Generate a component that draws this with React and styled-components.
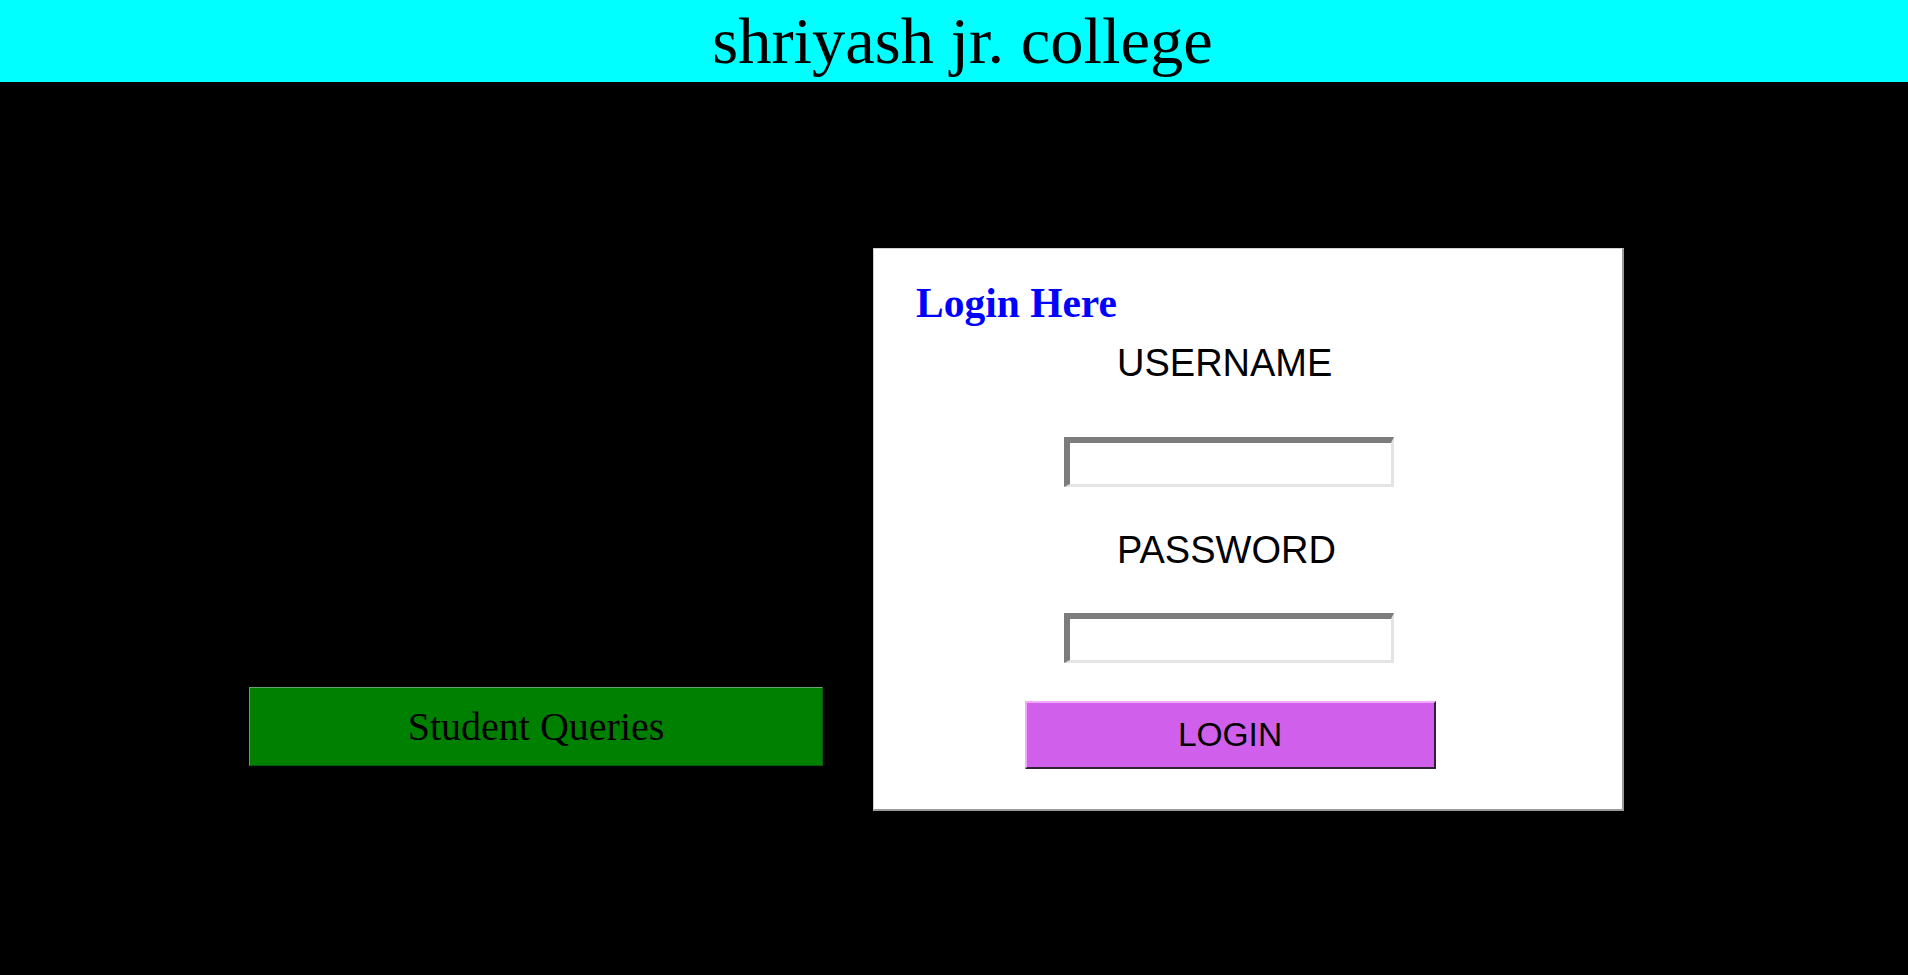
import React from "react"
import styled, { createGlobalStyle } from "styled-components"

const GlobalStyle = createGlobalStyle`
html, body {
  margin: 0;
  padding: 0;
  background: #000;
}
body {
  min-height: 100vh;
  font-family: "Liberation Serif", "Times New Roman", serif;
}
`

const Container = styled.div`
min-height: 100vh;
background: #000;
`

const Header = styled.header`
height: 82px;
padding-left: 17px;
background: #00ffff;
text-align: center;
`

const HeaderTitle = styled.h1`
margin: 0;
font-family: "Liberation Serif", "Times New Roman", serif;
font-weight: normal;
font-size: 66.5px;
line-height: 82px;
color: #000;
`

const Main = styled.main`
display: flex;
align-items: flex-end;
gap: 50px;
padding: 166px 0 0 249px;
`

const QueriesButton = styled.button`
width: 574px;
height: 79px;
margin-bottom: 45px;
padding: 0;
background: #008000;
border: 1px solid;
border-color: #66a366 #0a5a0a #0a5a0a #66a366;
font-family: "Liberation Serif", "Times New Roman", serif;
font-size: 40px;
color: #000;
cursor: pointer;
`

const LoginBox = styled.div`
box-sizing: border-box;
width: 751px;
background: #fff;
border-style: solid;
border-width: 1px 2px 2px 1px;
border-color: #d0d0d0 #9a9a9a #9a9a9a #d0d0d0;
padding: 31px 0 40px 42px;
`

const Title = styled.h2`
margin: 0;
font-family: "Liberation Serif", "Times New Roman", serif;
font-weight: bold;
font-size: 41.5px;
line-height: 47px;
color: #0000ff;
`

const Form = styled.form`
display: flex;
flex-direction: column;
align-items: center;
width: 432px;
margin-left: 98px;
`

const Label = styled.label`
align-self: flex-start;
margin: ${(p) => p.top}px 0 0 103px;
font-family: "Liberation Sans", Arial, sans-serif;
font-size: 38px;
line-height: 44px;
color: #000;
`

const Input = styled.input`
box-sizing: border-box;
width: 330px;
height: 50px;
margin: ${(p) => p.top}px 3px 0 0;
padding: 0 6px;
background: #fff;
border-style: solid;
border-width: 6px 3px 3px 6px;
border-color: #7c7c7c #e4e4e4 #e4e4e4 #7c7c7c;
font-family: "Liberation Sans", Arial, sans-serif;
font-size: 24px;
outline: none;
`

const LoginButton = styled.button`
box-sizing: border-box;
width: 411px;
height: 68px;
margin-top: 38px;
padding: 0;
background: #d060ec;
border: 2px solid;
border-color: #f2a8ff #2e2233 #2e2233 #f2a8ff;
font-family: "Liberation Sans", Arial, sans-serif;
font-size: 33.5px;
color: #000;
cursor: pointer;
`

const App = () => {
    return (
        <Container>
            <GlobalStyle />
            <Header>
                <HeaderTitle>shriyash jr. college</HeaderTitle>
            </Header>
            <Main>
                <QueriesButton type="button">Student Queries</QueriesButton>
                <LoginBox>
                    <Title>Login Here</Title>
                    <Form onSubmit={(e) => e.preventDefault()}>
                        <Label top={14} htmlFor="username">USERNAME</Label>
                        <Input top={52} id="username" type="text" />
                        <Label top={41} htmlFor="password">PASSWORD</Label>
                        <Input top={41} id="password" type="password" />
                        <LoginButton type="submit">LOGIN</LoginButton>
                    </Form>
                </LoginBox>
            </Main>
        </Container>
    )
}

export default App
